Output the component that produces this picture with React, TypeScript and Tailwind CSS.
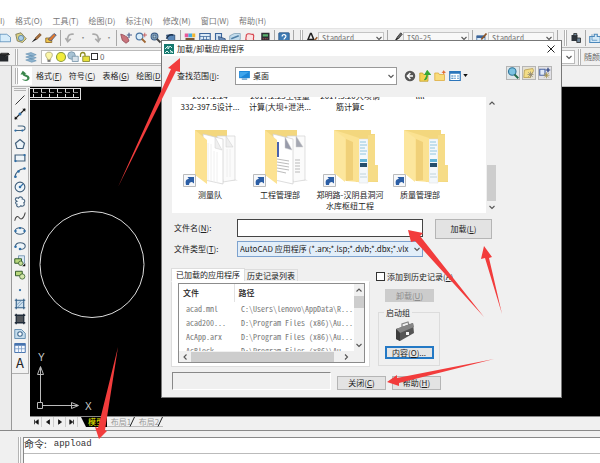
import React from "react";
import type { ReactNode } from "react";

type IconProps = { children: ReactNode; label?: string };

/** 16-unit drawing shown at 12px, the size of a toolbar glyph. */
function Glyph({ children }: IconProps) {
  return (
    <svg viewBox="0 0 16 16" className="h-3 w-3 shrink-0" fill="none" aria-hidden="true">
      {children}
    </svg>
  );
}

function ToolButton({ children, label }: IconProps) {
  return (
    <button type="button" aria-label={label} className="flex h-3 w-3 shrink-0 items-center justify-center">
      <Glyph>{children}</Glyph>
    </button>
  );
}

function Chevron({ dir = "down" }: { dir?: "up" | "down" | "left" | "right" }) {
  const d = {
    up: "M1.500 5.500 4 3l2.500 2.500",
    down: "M1.500 3 4 5.500 6.500 3",
    left: "M5.500 1.500 3 4l2.500 2.500",
    right: "M3 1.500 5.500 4 3 6.500",
  }[dir];
  return (
    <svg viewBox="0 0 8 8" className="h-2 w-2 shrink-0" fill="none" stroke="#555" strokeWidth="1.100" aria-hidden="true">
      <path d={d} />
    </svg>
  );
}

const Sep = () => <span className="mx-[3px] h-4 w-px shrink-0 bg-[#a8a8a8]" />;
const Grip = () => <span className="mx-[3px] h-4 w-[3px] shrink-0 border-x border-[#b4b4b4] bg-white" />;

function Key({ text, k, tail = "" }: { text: string; k: string; tail?: string }) {
  return (
    <>
      {text}(<u className="underline-offset-1">{k}</u>){tail}
    </>
  );
}

function StyleBox({ name, value }: { name: string; value: string }) {
  return (
    <span className="relative flex w-[66px] shrink-0 items-center">
      <select
        aria-label={name}
        className="h-3 w-full appearance-none border border-[#c4c4c4] bg-[#f8f8f8] px-[3px] text-[8px] leading-[10px] text-[#777] [font-feature-settings:'hwid']"
      >
        <option>{value}</option>
      </select>
      <span className="pointer-events-none absolute right-px">
        <Chevron />
      </span>
    </span>
  );
}

function MenuBar() {
  const items = ["格式(O)", "工具(T)", "绘图(D)", "标注(N)", "修改(M)", "窗口(W)", "帮助(H)"];
  return (
    <nav className="flex h-7 shrink-0 items-end gap-[10px] bg-white pb-px text-[8px] leading-[12px] text-[#777]">
      <button type="button">I)</button>
      {items.map((t) => (
        <button key={t} type="button" className="whitespace-nowrap">
          {t}
        </button>
      ))}
    </nav>
  );
}

function StandardToolbar() {
  return (
    <div className="flex h-5 shrink-0 items-center overflow-hidden border-y border-t-[#e4e4e4] border-b-[#b8b8b8] bg-[#f0f0f0]">
      <div className="flex gap-[3px]">
        <ToolButton label="打印">
          <path d="M0 3h9l5 4v6H0z" fill="#d6ecfa" stroke="#4f86b4" />
        </ToolButton>
        <ToolButton label="发布">
          <path d="M1 3 8 1l7 8-5 5-7-2z" fill="#d9cf82" stroke="#716c48" />
          <circle cx="8" cy="8" r="3.500" fill="#a9cde8" stroke="#5280a5" />
        </ToolButton>
        <ToolButton label="特性匹配">
          <path d="m2 14 5-6 2 2z" fill="#202020" />
          <path d="m7 8 6-6 2 2-6 6z" fill="#a8703c" stroke="#6f4522" />
        </ToolButton>
        <ToolButton label="块编辑器">
          <path d="M1 8h8v6H1z" fill="#f1c64d" stroke="#835b18" />
          <path d="m4 10 8-8 3 2-7 8z" fill="#e0792f" stroke="#34558a" />
        </ToolButton>
      </div>
      <Sep />
      <div className="flex items-center gap-[3px]">
        <ToolButton label="放弃">
          <path d="M13 3C7 2 4 5 5 12M2 8l3 5 4-4" stroke="#aaa" strokeWidth="2.200" />
        </ToolButton>
        <span className="w-2 text-center text-[8px] leading-none text-[#888]">·</span>
        <ToolButton label="重做">
          <path d="M3 3c6-1 9 2 8 9M14 8l-3 5-4-4" stroke="#aaa" strokeWidth="2.200" />
        </ToolButton>
        <span className="w-2 text-center text-[8px] leading-none text-[#888]">·</span>
      </div>
      <Sep />
      <div className="flex gap-[3px]">
        <ToolButton label="平移">
          <path d="M1 3c3 0 5 2 9 4l2 5-4 3-5-4z" fill="#c9747c" stroke="#8d4450" />
          <path d="M12 1v7M9 4h7" stroke="#4a5f8c" strokeWidth="1.500" />
        </ToolButton>
        <ToolButton label="实时缩放">
          <circle cx="6" cy="6" r="4.500" fill="#d9edfa" stroke="#4b76a4" strokeWidth="1.500" />
          <path d="m9 9 5 5" stroke="#a06734" strokeWidth="2.400" />
          <path d="M13 1v6M10 4h6" stroke="#b44" />
        </ToolButton>
        <ToolButton label="窗口缩放">
          <circle cx="6" cy="6" r="4.500" fill="#a5c8e4" stroke="#3e5e86" strokeWidth="1.500" />
          <path d="m9 9 5 5" stroke="#444" strokeWidth="2.400" />
          <path d="M4 4h4v4H4z" stroke="#345" />
        </ToolButton>
        <ToolButton label="缩放上一个">
          <path d="M2 4h11v9H5z" fill="#5a87b8" stroke="#27466e" />
          <path d="M2 9c2-5 5-6 9-5" stroke="#1c3350" strokeWidth="2" />
        </ToolButton>
      </div>
      <Sep />
      <div className="flex gap-[3px]">
        <ToolButton label="特性">
          <path d="M1 2h5v5H1z" fill="#e9589a" />
          <path d="M6 2h5v5H6z" fill="#44aee0" />
          <path d="M11 2h4v5h-4z" fill="#f1b62f" />
          <path d="M2 8h12v6H2z" fill="#7a5736" />
        </ToolButton>
        <ToolButton label="设计中心">
          <path d="M1 2h14v12H1z" fill="#dcebf7" stroke="#3c659b" strokeWidth="1.500" />
          <path d="M1 6h14M6 6v8M10 6v8M3 10h11" stroke="#3c659b" />
        </ToolButton>
        <ToolButton label="工具选项板">
          <path d="M2 2h8v12H2z" fill="#cfe1f2" stroke="#3c659b" strokeWidth="1.500" />
          <path d="m6 6 9 3v5H7z" fill="#6a8cb8" stroke="#284a78" />
        </ToolButton>
        <ToolButton label="图纸集">
          <path d="m1 5 6-3h8v8l-6 4H1z" fill="#c3dcec" stroke="#7c9db4" />
          <path d="m3 9 10-4" stroke="#4f7fa6" strokeWidth="2" />
        </ToolButton>
        <ToolButton label="标记集">
          <path d="M3 4c3-4 6 0 9-1 3 3-1 5 1 8-3 3-6 0-9 1C0 9 4 7 3 4z" fill="#fbe1e1" stroke="#d6404a" strokeWidth="1.500" />
        </ToolButton>
        <ToolButton label="计算器">
          <path d="M3 1h11v14H3z" fill="#2d2d33" />
          <path d="M5 3h7v3H5z" fill="#58b36c" />
          <path d="M5 9h7M5 12h7" stroke="#c55" strokeDasharray="2 1" />
        </ToolButton>
      </div>
      <Sep />
      <ToolButton label="帮助">
        <rect x="1" y="1" width="14" height="14" rx="1" fill="#3e7cb5" stroke="#274f7d" />
        <path d="M5.500 6c0-4 5.500-3 5 0-.3 2-2.500 2-2.500 4M8 11.500V13" stroke="#fff" strokeWidth="1.600" />
      </ToolButton>
      <Sep />
      <Grip />
      <ToolButton label="文字样式">
        <path d="M1 14 6 2h1l5 12M3 10h7" stroke="#222" strokeWidth="2" />
        <path d="m9 14 6-7" stroke="#9a5b2b" strokeWidth="2" />
      </ToolButton>
      <StyleBox name="文字样式" value="Standard" />
      <Sep />
      <ToolButton label="标注样式">
        <path d="m3 14 5-7 2 2z" fill="#222" />
        <path d="m8 7 5-6 2 2-5 6z" fill="#666" stroke="#333" />
      </ToolButton>
      <StyleBox name="标注样式" value="ISO-25" />
      <Sep />
      <ToolButton label="表格样式">
        <path d="M1 5h11v9H1z" fill="#dcebf7" stroke="#3c659b" />
        <path d="M1 5h11v3H1z" fill="#3c659b" />
        <path d="m7 10 7-8" stroke="#8d5528" strokeWidth="2.400" />
      </ToolButton>
      <StyleBox name="表格样式" value="Standard" />
      <Sep />
      <Grip />
      <ToolButton label="块">
        <path d="M2 4h8v8H2z" fill="#2d333b" />
        <path d="M5 2h4v3H5zM9 8h5v6H9z" fill="#71889c" stroke="#222" />
      </ToolButton>
      <Sep />
      <ToolButton label="视口">
        <path d="M1 6h6V3h4v3h4v8H1z" fill="#d4e9f7" stroke="#4c88bb" strokeWidth="1.500" />
        <path d="M4 3v8h7" stroke="#4c88bb" />
      </ToolButton>
    </div>
  );
}

function LayerToolbar() {
  return (
    <div className="flex h-[18px] shrink-0 items-center overflow-hidden border-b border-[#b8b8b8] bg-[#f0f0f0]">
      <ToolButton label="工作空间">
        <path d="M0 4h11v10H0z" fill="#25282c" />
        <path d="M1 3h10v2H1zM6 8l5-5 2 2" fill="#666" stroke="#111" />
      </ToolButton>
      <Grip />
      <div className="ml-1 mr-1 flex gap-1">
        <ToolButton label="图层特性管理器">
          <path d="m1 4 7-2 7 3-6 2zM1 8l7-2 7 3-6 2zM1 12l7-2 7 3-6 2z" fill="#8db3cf" stroke="#5a87a8" strokeWidth=".7" />
        </ToolButton>
      </div>
      <div className="flex h-[14px] min-w-0 flex-1 items-center border border-[#bbb] bg-white pl-px">
        <ToolButton label="开关图层">
          <path d="M8 1.500c6 0 5 6 2.300 8v2H5.700v-2C3 7.500 2 1.500 8 1.500z" fill="#fbf6a8" stroke="#9f9a63" />
          <path d="M6 12h4v2.500H6z" fill="#777" />
        </ToolButton>
        <ToolButton label="冻结图层">
          <circle cx="8" cy="8" r="6" fill="#f2ec3c" stroke="#8b9a3c" strokeWidth="1.500" />
        </ToolButton>
        <ToolButton label="视口冻结">
          <circle cx="6" cy="6" r="5" fill="#a8c3d4" stroke="#6d8ca2" />
          <path d="M7 7h8v7H7z" fill="#d7e2ea" stroke="#6d8ca2" />
        </ToolButton>
        <ToolButton label="锁定图层">
          <path d="M2 8V5c0-4 6-4 6 0v2" stroke="#8c8c22" strokeWidth="1.700" />
          <path d="M5 7h9v7H5z" fill="#e6e03c" stroke="#7a7a22" />
        </ToolButton>
        <span className="h-[7px] w-[7px] border border-[#333] bg-white" />
        <span className="ml-[2px] text-[8px] leading-3 text-[#666]">0</span>
        <span className="ml-auto px-px">
          <Chevron />
        </span>
      </div>
      <Grip />
      <span className="w-4 shrink-0 whitespace-nowrap text-right text-[8px] leading-[14px] text-[#666]">随颜</span>
    </div>
  );
}

function TextMenu() {
  const items: [string, string][] = [
    ["格式", "F"],
    ["符号", "C"],
    ["表格", "G"],
    ["绘图", "D"],
  ];
  return (
    <div className="flex h-[21px] shrink-0 items-center border-b border-[#b8b8b8] bg-[#f0f0f0] pl-[3px] text-[8px] leading-3 text-[#222]">
      <span className="h-4 w-[3px] shrink-0 border-x border-[#b4b4b4] bg-white" />
      <span className="mr-1 flex h-[18px] w-[14px] items-center justify-center bg-white">
        <Glyph>
          <path d="M5 1 2 6h3c0 3 6 2 6 5 0 2-4 3-7 1 4 5 11 2 10-2C13 6 8 7 8 5h2z" fill="#39864b" />
        </Glyph>
      </span>
      <div className="flex gap-[7px]">
        {items.map(([t, k]) => (
          <button key={k} type="button" className="whitespace-nowrap">
            <Key text={t} k={k} />
          </button>
        ))}
      </div>
    </div>
  );
}

const dot = "#2f6fa8";
const drawTools: [string, ReactNode][] = [
  ["直线", <path key="a" d="M2 14 14 2" stroke="#333" strokeWidth="1.300" />],
  ["构造线", <g key="a"><path d="M1 15 15 1" stroke="#222" strokeWidth="1.500" /><circle cx="8" cy="8" r="2" fill={dot} /><path d="M1 15v-4l4 4zM15 1v4l-4-4z" fill="#111" /></g>],
  ["多段线", <g key="a"><path d="M5 4h6c5 0 5 6 0 6H1" stroke="#45657f" strokeWidth="1.400" /><circle cx="2" cy="10" r="1.500" fill={dot} /><circle cx="11" cy="10" r="1.500" fill={dot} /></g>],
  ["正多边形", <path key="a" d="m8 2 6 5-2 7H4L2 7z" fill="#edf4f9" stroke="#42607c" strokeWidth="1.600" />],
  ["矩形", <g key="a"><path d="M1.500 4h13v8h-13z" fill="#edf4f9" stroke="#42607c" strokeWidth="1.600" /><circle cx="2" cy="12" r="1.500" fill={dot} /><circle cx="14" cy="4" r="1.500" fill={dot} /></g>],
  ["圆弧", <g key="a"><path d="M1 14C2 7 6 3 14 2" stroke="#42607c" strokeWidth="1.400" /><circle cx="2" cy="13" r="1.700" fill={dot} /><circle cx="6" cy="6" r="1.700" fill={dot} /><circle cx="14" cy="2" r="1.700" fill={dot} /></g>],
  ["圆", <g key="a"><circle cx="8" cy="8" r="6.500" fill="#edf4f9" stroke="#42607c" strokeWidth="1.500" /><path d="m8 8 4-4" stroke={dot} strokeWidth="1.500" /><circle cx="8" cy="8" r="1.700" fill={dot} /></g>],
  ["修订云线", <path key="a" d="M4 7C0 5 2 1 6 3c1-3 6-2 5 1 4 0 4 4 2 5 2 3-1 6-4 4-2 3-7 1-5-2-2 0-3-3 0-4z" fill="#f5f9fc" stroke="#42607c" strokeWidth="1.400" />],
  ["样条曲线", <path key="a" d="M1 13C2 7 5 6 7 9s6 2 8-7" stroke="#444" strokeWidth="1.400" />],
  ["椭圆", <g key="a"><ellipse cx="8" cy="8" rx="6.500" ry="4.300" fill="#edf4f9" stroke="#42607c" strokeWidth="1.400" /><circle cx="2" cy="8" r="1.600" fill={dot} /><circle cx="14" cy="8" r="1.600" fill={dot} /><circle cx="8" cy="4" r="1.500" fill={dot} /></g>],
  ["椭圆弧", <g key="a"><path d="M2 9c-1-7 13-7 13-1 0 3-3 5-7 4" fill="#edf4f9" stroke="#42607c" strokeWidth="1.400" /><circle cx="2" cy="9" r="1.700" fill={dot} /><circle cx="8" cy="12" r="1.700" fill={dot} /></g>],
  ["插入块", <g key="a"><path d="M6 1h8v10H6z" fill="#dbe9f5" stroke="#6286a6" /><path d="M1 5h9v6H1z" fill="#b8d77c" stroke="#315a2b" strokeWidth="1.300" /><circle cx="9" cy="11" r="3" fill="#c7dd95" stroke="#315a2b" /><path d="m11 15 4-4v4z" fill="#111" /></g>],
  ["创建块", <g key="a"><path d="M2 3h9v6H2z" fill="#b8d77c" stroke="#315a2b" strokeWidth="1.300" /><circle cx="11" cy="10" r="3.500" fill="#d4e6ab" stroke="#315a2b" /></g>],
  ["点", <circle key="a" cx="8" cy="8" r="1.500" fill={dot} />],
  ["图案填充", <g key="a"><path d="M3 3h10v10H3z" fill="#cfe0ee" /><path d="M3 1v14M13 1v14M1 3h14M1 13h14" stroke="#315f88" strokeWidth="1.500" /><path d="m4 9 5-5M5 12l7-7" stroke="#5e89ad" /></g>],
  ["渐变色", <g key="a"><path d="M3 3h10v10H3z" fill="#53575c" /><path d="M3 1v14M13 1v14M1 3h14M1 13h14" stroke="#202c3a" strokeWidth="1.700" /></g>],
  ["面域", <g key="a"><path d="M1 2h9l5 5v7H1z" fill="#c5dcec" stroke="#5e89ad" strokeWidth="1.200" /><circle cx="8" cy="8" r="3" fill="#fff" stroke="#426b90" strokeWidth="1.400" /></g>],
  ["表格", <g key="a"><path d="M1 2h14v12H1z" fill="#f4f8ff" stroke="#4673ae" strokeWidth="1.300" /><path d="M1 2h14v3H1z" fill="#4673ae" /><path d="M1 9h14M6 5v9M10 5v9" stroke="#7799c4" /></g>],
];

function DrawToolbar() {
  return (
    <div className="mt-px flex h-[286px] w-[17px] flex-col items-center justify-between border-b border-r border-[#b0b0b0] bg-[#f2f2f2] pb-1">
      <span className="h-[3px] w-3 border-y border-[#b4b4b4]" />
      {drawTools.map(([label, art]) => (
        <ToolButton key={label} label={label}>
          {art}
        </ToolButton>
      ))}
      <button type="button" aria-label="多行文字" className="text-[13px] leading-3 text-[#222]">
        A
      </button>
    </div>
  );
}

function Drawing() {
  return (
    <div className="min-h-0 flex-1 overflow-hidden bg-black">
      <svg viewBox="30 87 140 329" className="h-[329px] w-[140px]" fill="none" stroke="#ddd" strokeWidth="1">
        <path d="M30 88.500h51M30 97.500h49M30 99.500h51M80.500 88v12M33.500 89v3m0 2v4M41.500 89v3m0 2v4M49.500 89v3m0 2v4M57.500 89v3m0 2v4M65.500 89v3m0 2v4M73.500 89v3m0 2v4" />
        <path d="M33 92.500h5m3 0h5m3 0h5m3 0h5m3 0h5m3 0h5" stroke="#888" />
        <ellipse cx="92" cy="264.500" rx="52" ry="53" />
        <path d="M37.500 402.500h5v6h-5zM40.500 402v-35M43 405.500h35M37.500 374.500l3-8 3 8zM71.500 402.500l7 3-7 3z" stroke="#bbb" />
        <text x="38" y="361" fill="#ccc" stroke="none" className="text-[10px] font-['Liberation_Sans',sans-serif]">Y</text>
        <text x="85" y="410" fill="#ccc" stroke="none" className="text-[10px] font-['Liberation_Sans',sans-serif]">X</text>
      </svg>
    </div>
  );
}

function LayoutTabs() {
  return (
    <div className="flex h-[14px] shrink-0 items-start border-t border-[#888] bg-[#f0f0f0] text-[8px] leading-[10px]">
      {["M2 1v6M7 1 3 4l4 3z", "M6 1 2 4l4 3z", "M2 1l4 3-4 3z", "M6 1v6M1 1l4 3-4 3z"].map((d, i) => (
        <button key={d} type="button" aria-label={["第一个", "上一个", "下一个", "最后一个"][i]} className="flex h-[10px] w-3 items-center justify-center border-r border-[#ccc]">
          <svg viewBox="0 0 8 8" className="h-[6px] w-[6px]" fill="#111" stroke="#111">
            <path d={d} />
          </svg>
        </button>
      ))}
      <button type="button" className="relative ml-[3px] h-[10px] w-[26px] bg-black pl-1 text-center text-[#f2f200]">
        模型
        <svg viewBox="0 0 6 10" className="absolute left-0 top-0 h-[10px] w-[6px]" fill="#f0f0f0">
          <path d="M0 0v10h5z" />
        </svg>
      </button>
      {["布局1", "布局2"].map((t) => (
        <button key={t} type="button" className="relative h-[10px] w-[28px] border-b border-[#bbb] text-center text-[#999]">
          {t}
          <svg viewBox="0 0 6 10" className="absolute right-0 top-0 h-[10px] w-[6px]" stroke="#222" fill="none">
            <path d="M5.500 0 1 9.500" />
          </svg>
        </button>
      ))}
    </div>
  );
}

/** Windows folder thumbnail; "blank" and "text" hold loose sheets, "nested" holds another folder. */
function Folder({ kind }: { kind: "blank" | "text" | "nested" }) {
  return (
    <svg viewBox="0 0 56 60" className="h-[60px] w-[56px]" aria-hidden="true">
      {kind === "nested" ? (
        <g>
          <path d="M12 1h37v4h4v31h3v17H34z" fill="#f3d77e" />
          <path d="M37 10h9v44h-9z" fill="#f4f8fb" stroke="#ddd" strokeWidth=".5" />
          <path d="M38 13h6M38 16h7M38 19h5M38 22h7M38 25h6" stroke="#7ab9d8" strokeWidth=".8" />
          <path d="M38 30h7v3h-7z" fill="#65b5d8" />
          <path d="M38 34h7v4h-7z" fill="#264f6c" />
          <path d="M38 45h6M38 48h7" stroke="#b4cad4" strokeWidth=".8" />
          <path d="M46 6h7v30h3v16l-10 1z" fill="#f6dc87" />
          <path d="M12 1 25 5l12 4v44L24 52 12 44z" fill="#fbe292" />
          <path d="M24 10l7 3v38l-7 1z" fill="#f0d078" />
          <path d="M12 1 23 9v44l-11-9z" fill="#fce69d" />
        </g>
      ) : (
        <g>
          <path d="M13 1h32v10H13z" fill="#f3d77e" />
          <path d="M40 52h16l-4-3z" fill="#eee" />
          <path d="M35 7h18v44l-12 2z" fill="#fbfbfb" stroke="#d2d2d2" strokeWidth=".7" />
          <path d="M44 7l7 11h-7z" fill={kind === "text" ? "#a5a8b2" : "#eee"} stroke="#ccc" strokeWidth=".5" />
          <path d="M21 5l20 5v45l-18-4z" fill="#fff" stroke="#cfcfcf" strokeWidth=".7" />
          <path d="M33 8l7 13-7-2z" fill={kind === "text" ? "#989baa" : "#efefef"} stroke="#ccc" strokeWidth=".5" />
          {kind === "text" ? (
            <g>
              <path d="M23 13h4v15h-4z" fill="#4a62ad" />
              <path d="M25 30l12 2M25 33l12 2M25 36l12 2M25 39l12 2M25 42l9 2M43 31h5M43 34h5M43 37h5M43 40h5M43 43h5" stroke="#a9a9a9" strokeWidth=".8" />
            </g>
          ) : (
            <path d="M26 14v37M29 15v37M32 22v31M35 23v31M45 20v28M48 20v28" stroke="#ececec" strokeWidth=".8" />
          )}
          <path d="M13 1l12 10v44l-12-9z" fill="#fce292" />
        </g>
      )}
      <path d="M1.500 45.500h12v12h-12z" fill="#f6f8fb" stroke="#bbb" />
      <path d="M4 56c-1-4 0-6 3-6L5.500 48H12v6.500L10 53c-2 0-3 1-3 3z" fill="#2b5ea5" />
    </svg>
  );
}

const cutLabels = [
  ["2017.2.24", "332-397.5设计..."],
  ["2017.2.23工程量", "计算(大坝+泄洪..."],
  ["2017.3.20大坝钢", "筋计算c"],
  ["llll", ""],
];
const folders: { kind: "blank" | "text" | "nested"; lines: string[] }[] = [
  { kind: "blank", lines: ["测量队"] },
  { kind: "text", lines: ["工程管理部"] },
  { kind: "nested", lines: ["郑明路-汉阴县洞河", "水库枢纽工程"] },
  { kind: "nested", lines: ["质量管理部"] },
];

function FileList() {
  return (
    <div className="ml-px mr-[64px] mt-3 flex h-[116px] overflow-hidden bg-white">
      <div className="-mt-[7px] flex-1 text-center text-[8px] leading-[11px]">
        <ul className="ml-[3px] grid w-[280px] grid-cols-4">
          {cutLabels.map(([a, b]) => (
            <li key={a} className="whitespace-nowrap">
              <p>{a}</p>
              <p>{b}</p>
            </li>
          ))}
        </ul>
        <ul className="ml-[3px] mt-[17px] grid w-[280px] grid-cols-4">
          {folders.map((f) => (
            <li key={f.lines[0]}>
              <button type="button" className="flex w-full flex-col items-center whitespace-nowrap">
                <Folder kind={f.kind} />
                {f.lines.map((l) => (
                  <span key={l}>{l}</span>
                ))}
              </button>
            </li>
          ))}
        </ul>
      </div>
      <div className="flex w-[11px] flex-col items-center bg-[#f0f0f0] py-[2px]">
        <Chevron dir="up" />
        <span className="mt-auto h-9 w-[9px] bg-[#cdcdcd]" />
        <span className="mt-[2px] flex">
          <Chevron />
        </span>
      </div>
    </div>
  );
}

const loaded = [
  ["acad.mnl", "C:\\Users\\lenovo\\AppData\\R..."],
  ["acad200...", "D:\\Program Files (x86)\\Au..."],
  ["AcApp.arx", "D:\\Program Files (x86)\\Au..."],
  ["AcBlock", "D:\\Program Files (x86)\\Au"],
];

function LoadedApps() {
  return (
    <section className="w-[199px]">
      <div role="tablist" className="flex h-[13px] items-end text-[8px] leading-[12px]">
        <button role="tab" aria-selected="true" type="button" className="h-[13px] w-[74px] border-x border-t border-[#ddd] bg-white">
          已加载的应用程序
        </button>
        <button role="tab" aria-selected="false" type="button" className="h-3 w-[53px] border-r border-t border-[#ddd]">
          历史记录列表
        </button>
      </div>
      <div className="border border-[#ddd] border-t-white bg-white pb-[3px] pl-[6px] pr-1 pt-px">
        <div className="border border-[#8c8c8c]">
          <div className="flex h-[67px]">
            <div className="min-w-0 flex-1 overflow-hidden">
              <table className="w-full table-fixed text-left text-[8px]">
                <thead>
                  <tr className="h-[18px]">
                    <th className="w-[55px] border-r border-[#e2e2e2] p-0 pl-1 font-medium leading-[18px]">文件</th>
                    <th className="p-0 pl-1 font-medium leading-[18px]">路径</th>
                  </tr>
                </thead>
                <tbody className="text-[#777] [font-feature-settings:'hwid']">
                  {loaded.map(([f, p]) => (
                    <tr key={f} className="h-[14px]">
                      <td className="whitespace-nowrap p-0 pl-[7px] leading-[14px]">{f}</td>
                      <td className="whitespace-nowrap p-0 pl-[7px] leading-[14px]">{p}</td>
                    </tr>
                  ))}
                </tbody>
              </table>
            </div>
            <div className="flex w-[10px] shrink-0 flex-col items-center bg-[#f0f0f0] py-[2px]">
              <Chevron dir="up" />
              <span className="mt-[2px] h-3 w-[10px] bg-[#cdcdcd]" />
              <span className="mt-auto flex">
                <Chevron />
              </span>
            </div>
          </div>
          <div className="flex h-[11px] items-center bg-[#f0f0f0] pl-[2px]">
            <Chevron dir="left" />
            <span className="ml-[2px] h-[10px] w-[143px] bg-[#cdcdcd]" />
            <span className="ml-2 flex">
              <Chevron dir="right" />
            </span>
          </div>
        </div>
      </div>
    </section>
  );
}

function StartupGroup() {
  return (
    <div className="flex flex-col items-start pt-1 text-[8px]">
      <label className="flex items-center gap-[2px] whitespace-nowrap leading-[9px] text-[#222]">
        <input type="checkbox" className="h-[9px] w-[9px] appearance-none border border-[#333] bg-white" />
        <span>
          <Key text="添加到历史记录" k="A" />
        </span>
      </label>
      <button type="button" disabled className="ml-[9px] mt-2 h-[13px] w-[49px] bg-[#cccccc] leading-[13px] text-[#8c8c8c]">
        <Key text="卸载" k="U" />
      </button>
      <fieldset className="ml-[2px] mt-[5px] flex h-[59px] w-[62px] flex-col items-center border border-[#dcdcdc]">
        <legend className="ml-[5px] px-[2px] leading-[11px]">启动组</legend>
        <svg viewBox="0 0 20 20" className="mr-2 mt-[3px] h-5 w-5 shrink-0" aria-hidden="true">
          <path d="M7 6V3l6-2 1 3" fill="none" stroke="#888" strokeWidth="1.300" />
          <path d="M1 8 18 2l1 10L5 20l-4-2z" fill="#555" />
          <path d="M1 8 18 2l1 4-14 6z" fill="#858585" />
          <path d="M1 8l4 4v8l-4-2z" fill="#3c3c3c" />
          <path d="M11 11h3v3h-3z" fill="#f4f4f4" />
        </svg>
        <button type="button" className="mt-[5px] h-[13px] w-[49px] shrink-0 border-2 border-[#2479c5] bg-[#e5e5e5] leading-[9px]">
          <Key text="内容" k="O" tail="..." />
        </button>
      </fieldset>
    </div>
  );
}

function LoadDialog() {
  const push = "border border-[#b5b5b5] bg-[#e3e3e3] text-center text-[8px]";
  return (
    <div role="dialog" aria-label="加载/卸载应用程序" className="absolute left-[161px] top-10 w-[401px] border border-[#777] bg-[#f0f0f0] pb-[7px] text-[8px] text-[#222]">
      <header className="flex h-[15px] items-center gap-[3px] bg-white pl-[2px] pr-[5px]">
        <svg viewBox="0 0 10 10" className="h-[10px] w-[10px]" aria-hidden="true">
          <path d="M0 0h10v10H0z" fill="#16796f" />
          <path d="m1 5 3-3v3l2-3 2 2M1 9l2-2 2 2M6 6l3 3M6 8h3" stroke="#d8f3ee" fill="none" />
        </svg>
        <h1 className="leading-[15px]">加载/卸载应用程序</h1>
        <button type="button" aria-label="关闭窗口" className="ml-auto">
          <svg viewBox="0 0 10 10" className="h-[10px] w-[10px]" stroke="#222" fill="none">
            <path d="m1.500 1.500 7 7m0-7-7 7" />
          </svg>
        </button>
      </header>

      <div className="pl-[9px]">
        <div className="flex items-center pr-[9px] pt-[10px]">
          <label htmlFor="lookin" className="w-16 pl-[6px]">
            <Key text="查找范围" k="I" tail=":" />
          </label>
          <span className="relative flex w-[162px] items-center">
            <select id="lookin" className="h-[18px] w-full appearance-none border border-[#999] bg-white pl-[17px] text-[8px] leading-4">
              <option>桌面</option>
            </select>
            <svg viewBox="0 0 12 10" className="pointer-events-none absolute left-1 h-[9px] w-[11px]">
              <path d="M0 0h12v8H0z" fill="#1c86d8" />
              <path d="M1 1h10L2 7H1z" fill="#3fa5ec" />
              <path d="M3 9h6" stroke="#1c6aa8" />
            </svg>
            <span className="pointer-events-none absolute right-[2px]">
              <Chevron />
            </span>
          </span>
          <div className="ml-[7px] flex items-center gap-[3px]">
            <ToolButton label="后退">
              <circle cx="8" cy="8" r="7" fill="#555" />
              <path d="M12 8H5m3.500-4L4.500 8l4 4" stroke="#fff" strokeWidth="2" />
            </ToolButton>
            <ToolButton label="向上一级">
              <path d="M1 4h4l1 2h6v9H1z" fill="#f3d254" stroke="#c09c2c" />
              <path d="M7 13c4 0 4-4 4-8M8 6l3-5 4 5z" fill="#35a735" stroke="#35a735" strokeWidth="1.500" />
            </ToolButton>
            <ToolButton label="新建文件夹">
              <path d="M1 4h5l1 2h7v8H1z" fill="#f9dc7b" stroke="#dca93a" />
              <path d="m13 0 1 2 2 1-2 1-1 2-1-2-2-1 2-1z" fill="#e06a2c" />
            </ToolButton>
            <ToolButton label="视图">
              <path d="M1 2h14v12H1z" fill="#fff" stroke="#2b75bb" strokeWidth="1.600" />
              <path d="M1 2h14v3H1z" fill="#2b75bb" />
              <path d="M3 8h3M7 8h2M11 8h2M3 11h3M7 11h2M11 11h2" stroke="#2b75bb" strokeWidth="1.600" />
            </ToolButton>
            <svg viewBox="0 0 6 4" className="-ml-px h-[3px] w-[5px]">
              <path d="M0 0h6L3 4z" fill="#111" />
            </svg>
          </div>
          <div className="mb-[5px] ml-auto flex gap-[2px]">
            <button type="button" aria-label="查找文件" className="flex h-[14px] w-[14px] items-center justify-center border border-[#b5b5b5] bg-[#dfe6e8]">
              <Glyph>
                <circle cx="7" cy="6" r="5" fill="#7cc3e2" stroke="#2e7398" strokeWidth="1.500" />
                <path d="m10 10 5 5" stroke="#246b4c" strokeWidth="2.500" />
              </Glyph>
            </button>
            <button type="button" aria-label="浏览收藏夹" className="flex h-[14px] w-[14px] items-center justify-center border border-[#b5b5b5] bg-[#e5e1d4]">
              <Glyph>
                <path d="m2 4 11-2 1 3-4 9H1z" fill="#f3dd86" stroke="#b59b4c" />
                <path d="M10 6v8M6 10h8M7 7l6 6M13 7l-6 6" stroke="#8c8678" />
              </Glyph>
            </button>
            <button type="button" aria-label="添加到收藏夹" className="flex h-[14px] w-[14px] items-center justify-center border border-[#b5b5b5] bg-[#e1e1e6]">
              <Glyph>
                <path d="M1 3h7v8H1z" fill="#dfe8f7" stroke="#4b67a6" strokeWidth="1.500" />
                <path d="M12 1v6M9 4h6" stroke="#223a7a" strokeWidth="1.600" />
                <path d="M10 7v8M6 11h8M7 8l6 6M13 8l-6 6" stroke="#a18f45" />
              </Glyph>
            </button>
          </div>
        </div>

        <FileList />

        <div className="mt-[6px] grid grid-cols-[66px_186px_69px] gap-y-[2px]">
          <label htmlFor="filename" className="pl-[3px] leading-[18px]">
            <Key text="文件名" k="N" tail=":" />
          </label>
          <input id="filename" type="text" className="h-[18px] w-full border border-[#444] bg-white px-1" />
          <button type="button" className={push + " ml-3 h-5 w-[57px]"}>
            <Key text="加载" k="L" />
          </button>
          <label htmlFor="filetype" className="pl-[3px] leading-4">
            <Key text="文件类型" k="T" tail=":" />
          </label>
          <span className="relative flex items-center">
            <select id="filetype" className="h-4 w-full appearance-none border border-[#7da2ce] bg-[#e2eef9] pl-[2px] pr-3 text-[8px] leading-[14px]">
              <option>AutoCAD 应用程序 (*.arx;*.lsp;*.dvb;*.dbx;*.vlx</option>
            </select>
            <span className="pointer-events-none absolute right-[2px]">
              <Chevron />
            </span>
          </span>
        </div>

        <div className="mt-[11px] flex gap-[6px]">
          <LoadedApps />
          <StartupGroup />
        </div>

        <div className="mt-[5px] flex items-end gap-[6px] pl-px">
          <output className="h-[18px] w-[159px] border border-b-white border-l-[#888] border-r-white border-t-[#888]" />
          <button type="button" className={push + " h-[14px] w-[49px] leading-3"}>
            <Key text="关闭" k="C" />
          </button>
          <button type="button" className={push + " h-[14px] w-[49px] leading-3"}>
            <Key text="帮助" k="H" />
          </button>
        </div>
      </div>
    </div>
  );
}

function Arrows() {
  return (
    <svg viewBox="0 0 600 463" className="pointer-events-none absolute left-0 top-0 h-[463px] w-[600px]" fill="#f23c3c" aria-hidden="true">
      <path d="M180 58 168 68l3 1L118 187l58-116 4 1z" />
      <path d="m99 439-4-12 3 1 20-81-13 83 2 1z" />
      <path d="m408 230 15 3-3 3 64 81-69-76-4 1z" />
      <path d="m484 246 8 11-3 1 13 56-17-56-4 1z" />
      <path d="m387 382 10-7v3l97-19-95 24v3z" />
    </svg>
  );
}

export default function App() {
  return (
    <div className="relative flex h-screen flex-col overflow-hidden bg-[#f0f0f0] font-['Noto_Sans_CJK_SC','Noto_Sans',sans-serif]">
      <MenuBar />
      <StandardToolbar />
      <LayerToolbar />
      <div className="flex min-h-0 flex-1">
        <div className="w-3 shrink-0 border-r border-[#999] bg-[#ececec]" />
        <div className="flex min-w-0 flex-1 flex-col">
          <TextMenu />
          <div className="flex min-h-0 flex-1">
            <DrawToolbar />
            <main className="ml-px flex min-w-0 flex-1 flex-col">
              <Drawing />
              <LayoutTabs />
            </main>
          </div>
        </div>
      </div>
      <div className="h-[7px] shrink-0 border-t border-[#888]" />
      <footer className="flex h-[26px] shrink-0">
        <div className="flex w-6 justify-end border-r border-[#888] pr-[2px]">
          <span className="w-[3px] border-x border-[#b4b4b4] bg-white" />
        </div>
        <div className="flex-1 border-t border-[#888] bg-white">
          <label className="flex h-4 items-start gap-[7px] border-b border-[#bbb] text-[#333]">
            <span className="text-[10px] leading-3">命令:</span>
            <input
              type="text"
              defaultValue="appload"
              className="h-3 min-w-0 flex-1 bg-transparent font-['Liberation_Mono',monospace] text-[9px] leading-3 outline-none"
            />
          </label>
        </div>
      </footer>
      <LoadDialog />
      <Arrows />
    </div>
  );
}
